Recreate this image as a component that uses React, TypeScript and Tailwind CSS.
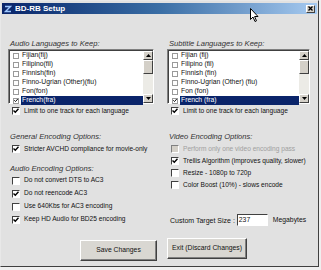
import React from "react";

const font = { fontFamily: '"Liberation Sans", Arial, sans-serif' };

function Check({ checked, disabled }: { checked?: boolean; disabled?: boolean }) {
  return (
    <span
      className={`relative inline-flex h-[8px] w-[8px] shrink-0 items-center justify-center border-t border-l border-r border-b ${
        disabled ? "border-t-[#808080] border-l-[#808080] border-r-[#ffffff] border-b-[#ffffff] bg-[#d4d0c8]" : "border-t-[#404040] border-l-[#404040] border-r-[#ffffff] border-b-[#ffffff] bg-white"
      }`}
    >
      {checked && (
        <svg width="6" height="6" viewBox="0 0 6 6" className="block">
          <path d="M0.5 2.5 L2.3 4.3 L5.5 0.8" stroke="#000" strokeWidth="1.4" fill="none" />
        </svg>
      )}
    </span>
  );
}

function SmallCheck({ checked }: { checked?: boolean }) {
  return (
    <span className="inline-flex h-[6px] w-[6px] shrink-0 items-center justify-center border border-[#9a9a9a] bg-white">
      {checked && (
        <svg width="5" height="5" viewBox="0 0 5 5" className="block">
          <path d="M0.3 2.2 L1.9 3.8 L4.7 0.6" stroke="#000" strokeWidth="1.2" fill="none" />
        </svg>
      )}
    </span>
  );
}

function CheckRow({ label, checked, disabled, h = "h-[12px]" }: { label: string; checked?: boolean; disabled?: boolean; h?: string }) {
  return (
    <div className={`flex ${h} items-center gap-[4px] pl-[4px]`}>
      <Check checked={checked} disabled={disabled} />
      <span className={`whitespace-nowrap text-[6.6px] leading-none ${disabled ? "text-[#a0a0a0]" : "text-[#111]"}`}>{label}</span>
    </div>
  );
}

function Label({ text }: { text: string }) {
  return <div className="flex h-[10px] items-center whitespace-nowrap pl-[2px] text-[7.6px] italic leading-none text-[#333]">{text}</div>;
}

function ListBox({ items, width }: { items: string[]; width: string }) {
  return (
    <div className={`flex h-[55px] ${width} border-t border-l border-r border-b border-t-[#808080] border-l-[#808080] border-r-[#ffffff] border-b-[#ffffff] bg-white`}>
      <div className="flex flex-1 flex-col border-t border-l border-t-[#404040] border-l-[#404040]">
        {items.map((it, i) => {
          const sel = i === items.length - 1;
          return (
            <div key={it} className="flex h-[9px] items-center">
              <span className="flex w-[11px] justify-center pl-[1px]">
                <SmallCheck checked={sel} />
              </span>
              <span
                className={`flex h-[9px] flex-1 items-center whitespace-nowrap pl-[1px] text-[6.8px] leading-none ${
                  sel ? "bg-[#0a246a] text-white" : "text-[#111]"
                }`}
              >
                {it}
              </span>
            </div>
          );
        })}
      </div>
      <div className="flex w-[10px] flex-col border-t border-t-[#404040] bg-[#ecebe6]">
        <div className="flex h-[9px] items-center justify-center border border-t-white border-l-white border-r-[#404040] border-b-[#404040] bg-[#d4d0c8]">
          <svg width="5" height="3" viewBox="0 0 5 3"><path d="M2.5 0 L5 3 L0 3 Z" fill="#000" /></svg>
        </div>
        <div className="h-[14px] border border-t-white border-l-white border-r-[#404040] border-b-[#404040] bg-[#d4d0c8]" />
        <div className="flex-1" />
        <div className="flex h-[9px] items-center justify-center border border-t-white border-l-white border-r-[#404040] border-b-[#404040] bg-[#d4d0c8]">
          <svg width="5" height="3" viewBox="0 0 5 3"><path d="M0 0 L5 0 L2.5 3 Z" fill="#000" /></svg>
        </div>
      </div>
    </div>
  );
}

function Button({ text, width }: { text: string; width: string }) {
  return (
    <div className={`flex h-[21px] ${width} items-center justify-center border border-t-white border-l-white border-r-[#404040] border-b-[#404040] bg-[#d9d7d2] text-[6.8px] leading-none text-[#111] shadow-[inset_-1px_-1px_0_#808080]`}>
      {text}
    </div>
  );
}

export default function App() {
  return (
    <div className="relative h-[270px] w-[321px] overflow-hidden bg-[#efefef]" style={font}>
      <div className="flex h-[267px] w-[319px] flex-col border border-t-[#e8e8e8] border-l-[#e8e8e8] border-r-[#404040] border-b-[#404040] bg-[#e1e1e1] px-[1px] pt-[2px]">
        {/* title bar */}
        <div className="flex h-[11px] items-center bg-gradient-to-r from-[#0a246a] via-[#3a6ea5] to-[#a6caf0] pl-[2px] pr-[2px]">
          <svg width="8" height="8" viewBox="0 0 8 8" className="mr-[3px]">
            <path d="M1 1.5 L6.5 1.5 L1.5 6.5 L7 6.5" stroke="#9ec8ff" strokeWidth="1.3" fill="none" />
          </svg>
          <span className="text-[8px] font-bold leading-none text-white">BD-RB Setup</span>
          <div className="flex-1" />
          <div className="flex h-[8px] w-[9px] items-center justify-center border border-t-white border-l-white border-r-[#404040] border-b-[#404040] bg-[#d4d0c8]">
            <svg width="5" height="5" viewBox="0 0 5 5"><path d="M0.5 0.5 L4.5 4.5 M4.5 0.5 L0.5 4.5" stroke="#000" strokeWidth="1.3" /></svg>
          </div>
        </div>

        {/* content */}
        <div className="flex pl-[6px] pt-[25px]">
          {/* left column */}
          <div className="flex w-[159px] flex-col">
            <Label text="Audio Languages to Keep:" />
            <ListBox
              width="w-[146px]"
              items={["Fijian(fij)", "Filipino(fil)", "Finnish(fin)", "Finno-Ugrian (Other)(fiu)", "Fon(fon)", "French(fra)"]}
            />
            <div className="mt-[1px]">
              <CheckRow label="Limit to one track for each language" checked />
            </div>
            <div className="mt-[15px]">
              <Label text="General Encoding Options:" />
            </div>
            <div className="mt-[1px]">
              <CheckRow label="Stricter AVCHD compliance for movie-only" checked />
            </div>
            <div className="mt-[9px]">
              <Label text="Audio Encoding Options:" />
            </div>
            <CheckRow h="h-[13px]" label="Do not convert DTS to AC3" />
            <CheckRow h="h-[13px]" label="Do not reencode AC3" checked />
            <CheckRow h="h-[13px]" label="Use 640Kbs for AC3 encoding" />
            <CheckRow h="h-[13px]" label="Keep HD Audio for BD25 encoding" checked />
            <div className="mt-[14px] flex pl-[72px]">
              <Button text="Save Changes" width="w-[77px]" />
            </div>
          </div>

          {/* right column */}
          <div className="flex w-[143px] flex-col">
            <Label text="Subtitle Languages to Keep:" />
            <ListBox
              width="w-[143px]"
              items={["Fijian (fij)", "Filipino (fil)", "Finnish (fin)", "Finno-Ugrian (Other) (fiu)", "Fon (fon)", "French (fra)"]}
            />
            <div className="mt-[1px]">
              <CheckRow label="Limit to one track for each language" checked />
            </div>
            <div className="mt-[15px]">
              <Label text="Video Encoding Options:" />
            </div>
            <div className="mt-[1px]">
              <CheckRow label="Perform only one video encoding pass" disabled />
              <CheckRow label="Trellis Algorithm (improves quality, slower)" checked />
              <CheckRow label="Resize  - 1080p to 720p" />
              <CheckRow label="Color Boost (10%)  - slows encode" />
            </div>
            <div className="mt-[23px] flex h-[12px] items-center pl-[3px]">
              <span className="whitespace-nowrap text-[7px] leading-none text-[#111]">Custom Target Size :</span>
              <div className="ml-[2px] flex h-[12px] w-[31px] items-center border border-t-[#404040] border-l-[#404040] border-r-white border-b-white bg-white pl-[1px] text-[6.8px] leading-none text-[#111]">
                237
              </div>
              <span className="ml-[5px] whitespace-nowrap text-[6.8px] leading-none text-[#111]">Megabytes</span>
            </div>
            <div className="mt-[12px] flex">
              <Button text="Exit (Discard Changes)" width="w-[80px]" />
            </div>
          </div>
        </div>
      </div>

      {/* mouse cursor */}
      <svg width="9" height="15" viewBox="0 0 9 15" className="absolute left-[250px] top-[8px]">
        <path d="M0.5 0.5 L0.5 11.5 L3 9 L5 13.5 L6.5 12.8 L4.6 8.5 L8 8.5 Z" fill="#fff" stroke="#000" strokeWidth="1" />
      </svg>
    </div>
  );
}
